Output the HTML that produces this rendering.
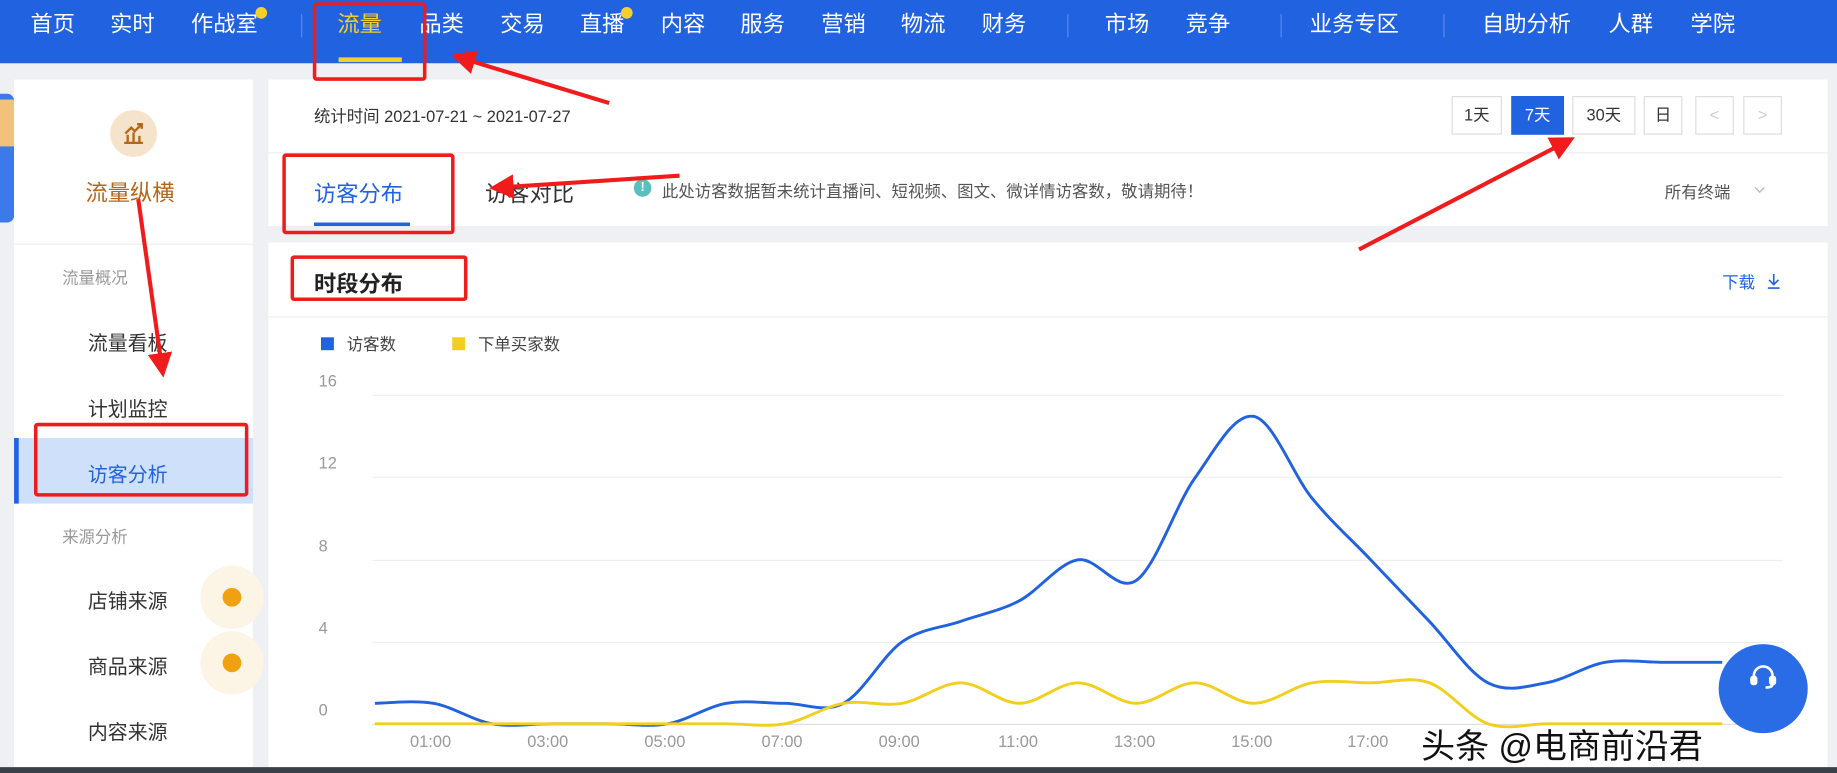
<!DOCTYPE html>
<html><head><meta charset="utf-8"><style>
*{margin:0;padding:0;box-sizing:border-box}
html,body{width:1837px;height:773px;overflow:hidden;background:#eef0f4;font-family:"Liberation Sans","Noto Sans CJK SC",sans-serif}
#w{position:absolute;left:0;top:0;width:1568px;height:660px;transform:scale(1.17156,1.1712);transform-origin:0 0;background:#eef0f4}
.a{position:absolute;white-space:nowrap}
.nav{position:absolute;left:0;top:0;width:1568px;height:54px;background:#2062e0}
.nav span{position:absolute;top:9px;color:#fff;font-size:19px;line-height:26px}
.sep{position:absolute;top:12px;width:1px;height:20px;background:#5c8be8}
.card{position:absolute;background:#fff}
.btn{position:absolute;top:82px;height:33px;border:1px solid #ddd;font-size:14px;line-height:31px;text-align:center;color:#333;background:#fff}
.rb{position:absolute;border:3px solid #f01c1c;border-radius:3px}
.yl{position:absolute;left:272px;font-size:14px;color:#999}
.xl{position:absolute;top:625px;font-size:14px;color:#999}
.gl{position:absolute;left:318px;width:1204px;height:1px;background:#eee}
</style></head><body><div id="w">
<div class="nav">
<span style="left:26px">首页</span><span style="left:94px">实时</span><span style="left:163px">作战室</span>
<div class="sep" style="left:257px"></div>
<span style="left:288px;color:#f5d02a">流量</span>
<div style="position:absolute;left:289px;top:49px;width:54px;height:4px;background:#f5d02a"></div>
<span style="left:358px">品类</span><span style="left:427px">交易</span><span style="left:495px">直播</span><span style="left:564px">内容</span><span style="left:632px">服务</span><span style="left:701px">营销</span><span style="left:769px">物流</span><span style="left:838px">财务</span>
<div class="sep" style="left:911px"></div>
<span style="left:943px">市场</span><span style="left:1012px">竞争</span>
<div class="sep" style="left:1093px"></div>
<span style="left:1118px">业务专区</span>
<div class="sep" style="left:1232px"></div>
<span style="left:1265px">自助分析</span><span style="left:1373px">人群</span><span style="left:1443px">学院</span>
<div style="position:absolute;left:218px;top:6px;width:10px;height:10px;border-radius:50%;background:#f5d02a"></div>
<div style="position:absolute;left:530px;top:6px;width:10px;height:10px;border-radius:50%;background:#f5d02a"></div>
</div>
<div style="position:absolute;left:0;top:80px;width:12px;height:110px;background:#3b7ae8;border-radius:0 6px 6px 0"></div>
<div style="position:absolute;left:0;top:85px;width:12px;height:40px;background:#f3c27a"></div>

<div class="card" style="left:12px;top:68px;width:204px;height:592px"></div>
<div style="position:absolute;left:94px;top:94px;width:40px;height:40px;border-radius:50%;background:#f6e3cc"></div>
<svg style="position:absolute;left:104px;top:104px" width="20" height="20" viewBox="0 0 20 20" fill="none" stroke="#b5661a" stroke-width="2"><path d="M2 18h16M5 17v-6M10 17v-8M15 17v-5M3 10l5-5 3 3 6-6M13 2h4v4"/></svg>
<div class="a" style="left:73px;top:150px;font-size:19px;color:#b5661a">流量纵横</div>
<div style="position:absolute;left:12px;top:208px;width:204px;height:1px;background:#eee"></div>
<div class="a" style="left:53px;top:227px;font-size:14px;color:#999">流量概况</div>
<div class="a" style="left:75px;top:279px;font-size:17px;color:#333">流量看板</div>
<div class="a" style="left:75px;top:335px;font-size:17px;color:#333">计划监控</div>
<div style="position:absolute;left:12px;top:374px;width:204px;height:56px;background:#cfe0fb"></div>
<div style="position:absolute;left:12px;top:374px;width:4px;height:56px;background:#2062e0"></div>
<div class="a" style="left:75px;top:391px;font-size:17px;color:#2062e0">访客分析</div>
<div class="a" style="left:53px;top:448px;font-size:14px;color:#999">来源分析</div>
<div class="a" style="left:75px;top:499px;font-size:17px;color:#333">店铺来源</div>
<div class="a" style="left:75px;top:555px;font-size:17px;color:#333">商品来源</div>
<div class="a" style="left:75px;top:611px;font-size:17px;color:#333">内容来源</div>
<div style="position:absolute;left:171px;top:483px;width:54px;height:54px;border-radius:50%;background:#fcf5e6"></div>
<div style="position:absolute;left:171px;top:539px;width:54px;height:54px;border-radius:50%;background:#fcf5e6"></div>
<div style="position:absolute;left:190px;top:502px;width:16px;height:16px;border-radius:50%;background:#f0a010"></div>
<div style="position:absolute;left:190px;top:558px;width:16px;height:16px;border-radius:50%;background:#f0a010"></div>

<div class="card" style="left:229px;top:68px;width:1331px;height:125px"></div>
<div class="a" style="left:268px;top:89px;font-size:14px;color:#333">统计时间 2021-07-21 ~ 2021-07-27</div>
<div class="btn" style="left:1239px;width:43px">1天</div>
<div class="btn" style="left:1290px;width:45px;background:#2062e0;color:#fff;border-color:#2062e0">7天</div>
<div class="btn" style="left:1342px;width:54px">30天</div>
<div class="btn" style="left:1403px;width:33px">日</div>
<div class="btn" style="left:1447px;width:33px;color:#ccc">&lt;</div>
<div class="btn" style="left:1488px;width:33px;color:#ccc">&gt;</div>
<div style="position:absolute;left:229px;top:130px;width:1331px;height:1px;background:#eee"></div>
<div class="a" style="left:268px;top:151px;font-size:19px;color:#2062e0">访客分布</div>
<div style="position:absolute;left:268px;top:190px;width:82px;height:3px;background:#2062e0"></div>
<div class="a" style="left:414px;top:151px;font-size:19px;color:#333">访客对比</div>
<div style="position:absolute;left:541px;top:153px;width:15px;height:15px;border-radius:50%;background:#5bbfc0;color:#fff;font-size:11px;text-align:center;line-height:15px;font-weight:bold">!</div>
<div class="a" style="left:565px;top:153px;font-size:14px;color:#555">此处访客数据暂未统计直播间、短视频、图文、微详情访客数，敬请期待！</div>
<div class="a" style="left:1421px;top:154px;font-size:14px;color:#555">所有终端</div>
<svg style="position:absolute;left:1497px;top:159px" width="10" height="7" viewBox="0 0 10 7" fill="none" stroke="#bbb" stroke-width="1.2"><path d="M1 1l4 4 4-4"/></svg>

<div class="card" style="left:229px;top:207px;width:1331px;height:453px"></div>
<div class="a" style="left:268px;top:228px;font-size:19px;font-weight:bold;color:#222">时段分布</div>
<div class="a" style="left:1470px;top:231px;font-size:14px;color:#2062e0">下载</div>
<svg style="position:absolute;left:1507px;top:233px" width="14" height="14" viewBox="0 0 14 14" fill="none" stroke="#2062e0" stroke-width="1.4"><path d="M7 1v9M3 6l4 4 4-4M2 13h10"/></svg>
<div style="position:absolute;left:229px;top:270px;width:1331px;height:1px;background:#eee"></div>
<div style="position:absolute;left:274px;top:288px;width:11px;height:11px;background:#2062e0"></div>
<div class="a" style="left:296px;top:284px;font-size:14px;color:#444">访客数</div>
<div style="position:absolute;left:386px;top:288px;width:11px;height:11px;background:#f2cf1f"></div>
<div class="a" style="left:408px;top:284px;font-size:14px;color:#444">下单买家数</div>
<div class="yl" style="top:317px">16</div><div class="yl" style="top:387px">12</div><div class="yl" style="top:458px">8</div><div class="yl" style="top:528px">4</div><div class="yl" style="top:598px">0</div>
<div class="gl" style="top:337px"></div><div class="gl" style="top:407px"></div><div class="gl" style="top:478px"></div><div class="gl" style="top:548px"></div><div class="gl" style="top:618px;background:#ddd"></div>
<div class="xl" style="left:350px">01:00</div><div class="xl" style="left:450px">03:00</div><div class="xl" style="left:550px">05:00</div><div class="xl" style="left:650px">07:00</div><div class="xl" style="left:750px">09:00</div><div class="xl" style="left:852px">11:00</div><div class="xl" style="left:951px">13:00</div><div class="xl" style="left:1051px">15:00</div><div class="xl" style="left:1150px">17:00</div>
<svg id="ch" style="position:absolute;left:0;top:0" width="1568" height="660">
<path id="pb" d="" fill="none" stroke="#2062e0" stroke-width="2.5"/>
<path id="py" d="" fill="none" stroke="#f2cf1f" stroke-width="2.5"/>
</svg>
<div style="position:absolute;left:1467px;top:550px;width:76px;height:76px;border-radius:50%;background:#2a6be6"></div>
<svg style="position:absolute;left:1492px;top:565px" width="26" height="26" viewBox="0 0 26 26" fill="none" stroke="#fff" stroke-width="2.2"><path d="M5 15v-3a8 8 0 0 1 16 0v3"/><rect x="3" y="13" width="4" height="6" rx="1.5" fill="#fff"/><rect x="19" y="13" width="4" height="6" rx="1.5" fill="#fff"/><path d="M21 19q0 3-6 3"/></svg>
<div class="a" style="left:1213px;top:614px;font-size:29px;color:#111;text-shadow:0 0 3px #fff,0 0 3px #fff">头条 @电商前沿君</div>
<div style="position:absolute;left:0;top:655px;width:1568px;height:5px;background:#3a4048"></div>

<div class="rb" style="left:267px;top:2px;width:97px;height:67px"></div>
<div class="rb" style="left:241px;top:131px;width:147px;height:69px"></div>
<div class="rb" style="left:248px;top:218px;width:151px;height:39px"></div>
<div class="rb" style="left:29px;top:361px;width:183px;height:63px"></div>
<svg style="position:absolute;left:0;top:0" width="1568" height="660">
<defs><marker id="m" markerWidth="6" markerHeight="6" refX="3" refY="3" orient="auto" markerUnits="strokeWidth"><path d="M0,0 L6,3 L0,6 z" fill="#f01c1c"/></marker></defs>
<g stroke="#f01c1c" stroke-width="3.5" marker-end="url(#m)">
<line x1="520" y1="88" x2="395" y2="50"/>
<line x1="580" y1="150" x2="428" y2="160"/>
<line x1="1160" y1="213" x2="1335" y2="122"/>
<line x1="118" y1="170" x2="138" y2="312"/>
</g></svg>
</div>
<script>
function pth(v){var p=v.map(function(d,i){return[320+50*i,618-17.5*d]});var s="M"+p[0][0]+","+p[0][1];
for(var i=0;i<p.length-1;i++){var a=p[i-1]||p[i],b=p[i],c=p[i+1],d=p[i+2]||c;
s+=" C"+(b[0]+(c[0]-a[0])/6)+","+(b[1]+(c[1]-a[1])/6)+" "+(c[0]-(d[0]-b[0])/6)+","+(c[1]-(d[1]-b[1])/6)+" "+c[0]+","+c[1];}return s;}
document.getElementById("pb").setAttribute("d",pth([1,1,0,0,0,0,1,1,1,4,5,6,8,7,12,15,11,8,5,2,2,3,3,3]));
document.getElementById("py").setAttribute("d",pth([0,0,0,0,0,0,0,0,1,1,2,1,2,1,2,1,2,2,2,0,0,0,0,0]));
</script>
</body></html>
